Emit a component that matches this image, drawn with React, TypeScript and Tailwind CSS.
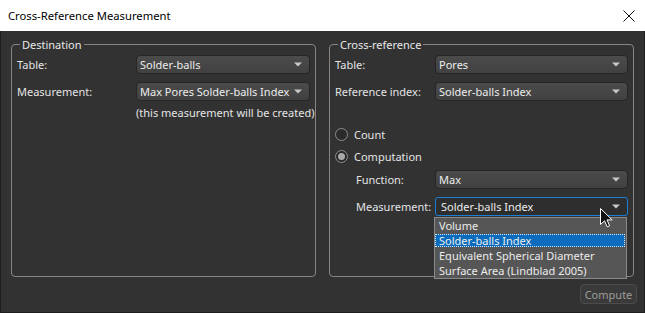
import React from "react";

const FONT = { fontFamily: '"Noto Sans", "Segoe UI", Arial, sans-serif' };

function Caret() {
  return (
    <svg width="8" height="5" viewBox="0 0 8 5" className="shrink-0">
      <path d="M0 0.5H8L4 4.5Z" fill="#c8c8c8" />
    </svg>
  );
}

function Select({ value, focused = false }: { value: string; focused?: boolean }) {
  return (
    <div
      className={
        focused
          ? "h-[19px] flex-1 min-w-0 flex items-center justify-between rounded-[3px] border border-[#1a7fd4] bg-[#2e2e2e] pl-[5px] pr-[7px] text-[#ececec]"
          : "h-[19px] flex-1 min-w-0 flex items-center justify-between rounded-[4px] border border-[#262626] bg-gradient-to-b from-[#4b4b4b] to-[#414141] pl-[3px] pr-[7px] text-[#ececec]"
      }
    >
      <span className="leading-none whitespace-nowrap">{value}</span>
      <Caret />
    </div>
  );
}

function Row({ label, labelW, indent = 0, children }: { label: string; labelW: number; indent?: number; children: React.ReactNode }) {
  return (
    <div className="flex items-center" style={{ paddingLeft: indent }}>
      <div className="text-[#e4e4e4] whitespace-nowrap shrink-0" style={{ width: labelW - indent }}>
        {label}
      </div>
      {children}
    </div>
  );
}

function Radio({ checked, label }: { checked?: boolean; label: string }) {
  return (
    <div className="flex items-center h-[16px] gap-[6px]">
      <div className="w-[13px] h-[13px] rounded-full border border-[#8e8e8e] bg-[#2a2a2a] flex items-center justify-center">
        {checked && <div className="w-[7px] h-[7px] rounded-full bg-[#a8a8a8]" />}
      </div>
      <span className="text-[#e4e4e4]">{label}</span>
    </div>
  );
}

export default function App() {
  return (
    <div className="w-[645px] h-[313px] relative overflow-hidden text-[11px] leading-[15px]" style={FONT}>
      <div className="h-[31px] bg-white flex items-center justify-between pl-[8px] pr-[10px]">
        <span className="text-[11.25px] text-black">Cross-Reference Measurement</span>
        <svg width="12" height="12" viewBox="0 0 12 12">
          <path d="M0.5 0.5L11.5 11.5M11.5 0.5L0.5 11.5" stroke="#111" strokeWidth="1" />
        </svg>
      </div>
      <div className="h-[282px] bg-[#323232] border-l border-r border-b border-[#1e1e1e] flex flex-col">
        <div className="flex gap-[13px] pl-[10px] pr-[10px] pt-[6px]">
          <fieldset className="w-[305px] min-w-0 shrink-0 h-[240px] border border-[#858585] rounded-[4px] px-[5px]">
            <legend className="ml-[3px] px-[2px] text-[#e8e8e8] leading-[15px]">Destination</legend>
            <div className="flex flex-col gap-[8px] mt-[3px]">
              <Row label="Table:" labelW={119}>
                <Select value="Solder-balls" />
              </Row>
              <Row label="Measurement:" labelW={119}>
                <Select value="Max Pores Solder-balls Index" />
              </Row>
            </div>
            <div className="pl-[119px] mt-[4px] text-[#e4e4e4] whitespace-nowrap">(this measurement will be created)</div>
          </fieldset>
          <fieldset className="w-[305px] min-w-0 shrink-0 h-[240px] border border-[#858585] rounded-[4px] px-[5px]">
            <legend className="ml-[3px] px-[2px] text-[#e8e8e8] leading-[15px]">Cross-reference</legend>
            <div className="flex flex-col gap-[8px] mt-[3px]">
              <Row label="Table:" labelW={100}>
                <Select value="Pores" />
              </Row>
              <Row label="Reference index:" labelW={100}>
                <Select value="Solder-balls Index" />
              </Row>
            </div>
            <div className="flex flex-col gap-[6px] mt-[25px]">
              <Radio label="Count" />
              <Radio checked label="Computation" />
            </div>
            <div className="flex flex-col gap-[8px] mt-[6px]">
              <Row label="Function:" labelW={100} indent={21}>
                <Select value="Max" />
              </Row>
              <Row label="Measurement:" labelW={100} indent={21}>
                <Select value="Solder-balls Index" focused />
              </Row>
            </div>
          </fieldset>
        </div>
        <div className="flex justify-end pr-[7px] mt-[7px]">
          <div className="w-[57px] h-[20px] rounded-[4px] border border-[#4c4c4c] bg-[#3a3a3a] flex items-center justify-center text-[#9c9c9c]">
            Compute
          </div>
        </div>
      </div>

      <div className="absolute left-[434px] top-[217px] w-[193px] border border-[#8a8a8a] bg-[#565656] text-[#ececec]">
        <div className="h-[15px] flex items-center pl-[4px]">Volume</div>
        <div className="h-[15px] flex items-center">
          <div className="h-[13px] flex-1 mr-[1px] bg-[#0b6cbd] border border-dotted border-[#d8e6f4] flex items-center pl-[3px]">
            Solder-balls Index
          </div>
        </div>
        <div className="h-[15px] flex items-center pl-[4px]">Equivalent Spherical Diameter</div>
        <div className="h-[15px] flex items-center pl-[4px]">Surface Area (Lindblad 2005)</div>
      </div>

      <svg className="absolute left-[600px] top-[208px]" width="13" height="20" viewBox="0 0 13 20">
        <path d="M0.5 0.5V16.5L4.5 12.8L7.2 18.8L9.6 17.8L7 11.9H12.2Z" fill="#111" stroke="#fff" strokeWidth="1" strokeLinejoin="round" />
      </svg>
    </div>
  );
}
